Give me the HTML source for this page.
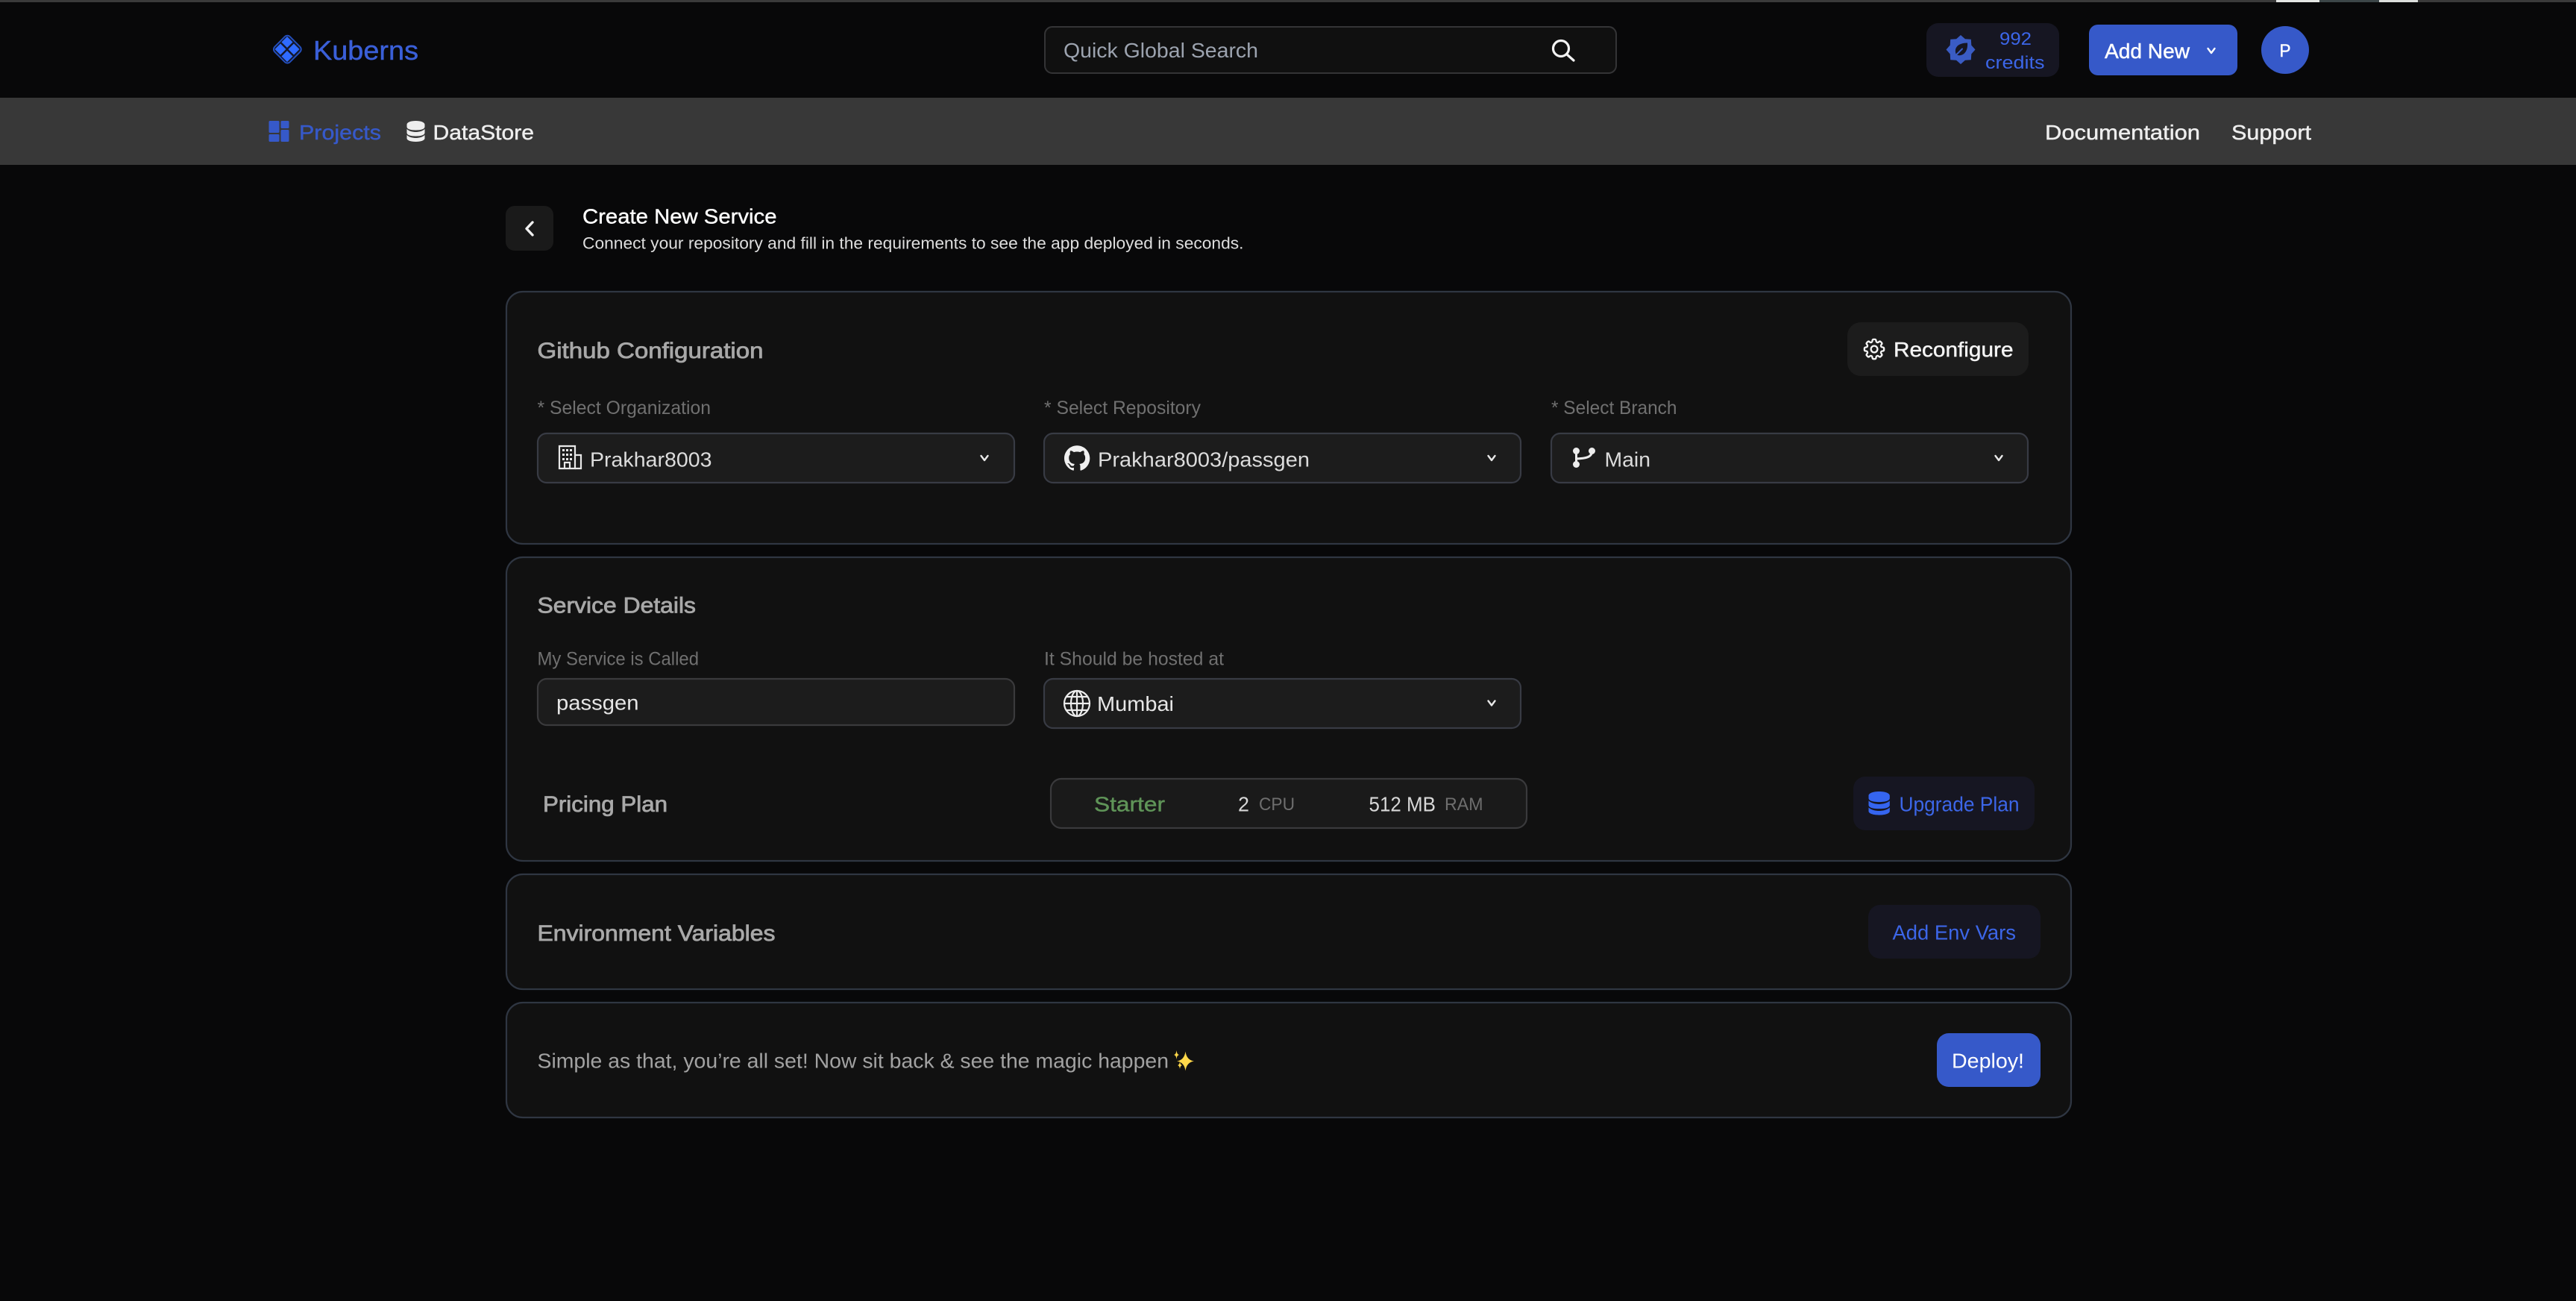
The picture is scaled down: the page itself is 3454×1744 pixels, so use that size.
<!DOCTYPE html>
<html lang="en">
<head>
<meta charset="utf-8">
<title>Kuberns - Create New Service</title>
<style>
html,body{margin:0;padding:0;background:#080809;width:3454px;height:1744px;overflow:hidden}
svg{display:block}
text{font-family:"Liberation Sans",sans-serif;font-size:28px;white-space:pre}
.med{stroke-width:.45px;paint-order:stroke}
.h{font-size:30px;fill:#a8a8a8;stroke:#a8a8a8;stroke-width:.8px}
.lbl{font-size:25px;fill:#707070}
.val{fill:#dcdcdc}
.card{fill:#111111;stroke:#2f3642;stroke-width:2.2}
.sel{fill:#1c1c1c;stroke:#383b44;stroke-width:2.2}
.chev{fill:none;stroke:#e8e8e8;stroke-width:2.4;stroke-linecap:round;stroke-linejoin:round}
</style>
</head>
<body>
<svg xmlns="http://www.w3.org/2000/svg" width="3454" height="1744" viewBox="0 0 3454 1744">
<defs>
  <path id="db" d="M0 5C0 2 5 0 12 0S24 2 24 5V8C24 11 19 12.500 12 12.500S0 11 0 8ZM0 11C3 14 8 15 12 15S21 14 24 11V16C24 19 19 20.500 12 20.500S0 19 0 16ZM0 19C3 22 8 23 12 23S21 22 24 19V23.500C24 26 19 28 12 28S0 26 0 23.500Z"/>
  <path id="chevron" d="M-4.500 -3L0 3L4.500 -3"/>
</defs>

<rect width="3454" height="1744" fill="#080809"/>

<!-- top strip -->
<rect width="3454" height="3" fill="#3a3a3a"/>
<rect x="3052" width="58" height="3" fill="#e4e6e4"/>
<rect x="3110" width="80" height="3" fill="#3c4648"/>
<rect x="3190" width="52" height="3" fill="#dcdedc"/>

<!-- header -->
<g>
  <rect x="370.500" y="51.500" width="29" height="29" rx="5" transform="rotate(45 385 66.500)" fill="#14182a" stroke="#2450c0" stroke-width="1.800"/>
  <g fill="#2f6bff">
    <path d="M385 49l7.500 7.500l-7.500 7.500l-7.500-7.500Z"/>
    <path d="M376 58.500l7.500 7.500l-7.500 7.500l-7.500-7.500Z"/>
    <path d="M394 58.500l7.500 7.500l-7.500 7.500l-7.500-7.500Z"/>
    <path d="M385 68l7.500 7.500l-7.500 7.500l-7.500-7.500Z"/>
  </g>
  <text x="420" y="80" style="font-size:36px" fill="#3a5fd8" stroke="#3a5fd8" class="med" textLength="141" lengthAdjust="spacingAndGlyphs">Kuberns</text>
</g>

<rect x="1401" y="36" width="766" height="62" rx="10" fill="#101010" stroke="#343436" stroke-width="2"/>
<text x="1426" y="77" fill="#9ca3af" textLength="261" lengthAdjust="spacingAndGlyphs">Quick Global Search</text>
<g fill="none" stroke="#f2f2f2" stroke-width="3.200" stroke-linecap="round">
  <circle cx="2093" cy="65" r="10.500"/>
  <path d="M2101 73L2110 81"/>
</g>

<rect x="2583" y="31" width="178" height="72" rx="16" fill="#161622"/>
<polygon transform="translate(2629 66.500)" fill="#3a5cc4" points="0,-19.500 5.900,-14.300 13.800,-13.800 14.300,-5.900 19.500,0 14.300,5.900 13.800,13.800 5.900,14.300 0,19.500 -5.900,14.300 -13.800,13.800 -14.300,5.900 -19.500,0 -14.300,-5.900 -13.800,-13.800 -5.900,-14.300"/>
<g transform="translate(2629 66.500)">
  <path d="M-6 7C-10 -3 -3 -9 9 -9C10 3 3 10 -6 7Z" fill="#161622"/>
  <path d="M-7 8L2 -1" stroke="#3a5cc4" stroke-width="2" stroke-linecap="round"/>
</g>
<text x="2681" y="60" fill="#3c66e8" style="font-size:24px" textLength="43" lengthAdjust="spacingAndGlyphs">992</text>
<text x="2662" y="92" fill="#3c66e8" style="font-size:24px" textLength="79.500" lengthAdjust="spacingAndGlyphs">credits</text>

<rect x="2801" y="33" width="199" height="68" rx="12" fill="#3659c9"/>
<text x="2822" y="78" fill="#fff" stroke="#fff" class="med" textLength="114" lengthAdjust="spacingAndGlyphs">Add New</text>
<use href="#chevron" x="2965" y="68" class="chev" style="stroke:#fff"/>

<circle cx="3064" cy="67" r="32" fill="#3659c9"/>
<text x="3056.500" y="76" fill="#fff" stroke="#fff" class="med" style="font-size:24px" textLength="15" lengthAdjust="spacingAndGlyphs">P</text>

<!-- nav -->
<rect y="131" width="3454" height="90" fill="#383838"/>
<g fill="#3659c9">
  <rect x="360.500" y="162" width="14" height="16" rx="1.500"/>
  <rect x="376.500" y="162" width="11" height="10" rx="1.500"/>
  <rect x="360.500" y="180" width="14" height="10" rx="1.500"/>
  <rect x="376.500" y="174" width="11" height="16" rx="1.500"/>
</g>
<text x="401" y="187" fill="#3659c9" stroke="#3659c9" class="med" textLength="110" lengthAdjust="spacingAndGlyphs">Projects</text>
<use href="#db" x="545.500" y="162" fill="#eeeeee"/>
<text x="580.500" y="187" fill="#eeeeee" stroke="#eeeeee" class="med" textLength="135.500" lengthAdjust="spacingAndGlyphs">DataStore</text>
<text x="2742" y="187" fill="#eeeeee" stroke="#eeeeee" class="med" textLength="208" lengthAdjust="spacingAndGlyphs">Documentation</text>
<text x="2992" y="187" fill="#eeeeee" stroke="#eeeeee" class="med" textLength="107" lengthAdjust="spacingAndGlyphs">Support</text>

<!-- page heading -->
<rect x="678" y="276" width="64" height="60" rx="12" fill="#1a1a1a"/>
<path d="M714 298L706 306.500L714 315" fill="none" stroke="#f0f0f0" stroke-width="3.400" stroke-linecap="round" stroke-linejoin="round"/>
<text x="781" y="299.500" fill="#fff" stroke="#fff" stroke-width=".4" textLength="260.500" lengthAdjust="spacingAndGlyphs">Create New Service</text>
<text x="781" y="333.500" fill="#dedede" style="font-size:22px" textLength="886.500" lengthAdjust="spacingAndGlyphs">Connect your repository and fill in the requirements to see the app deployed in seconds.</text>

<!-- card 1 -->
<rect class="card" x="679" y="391" width="2098" height="338" rx="22"/>
<text class="h" x="720.500" y="480" textLength="303" lengthAdjust="spacingAndGlyphs">Github Configuration</text>

<rect x="2477" y="432" width="243" height="72" rx="18" fill="#1c1c1c"/>
<g transform="translate(2495.500 450.500) scale(1.460)" fill="none" stroke="#f4f4f4" stroke-width="1.600" stroke-linejoin="round">
  <path d="M10.343 3.940c.090-.542.560-.940 1.110-.940h1.093c.550 0 1.020.398 1.110.940l.149.894c.070.424.384.764.780.930.398.164.855.142 1.205-.108l.737-.527a1.125 1.125 0 0 1 1.450.120l.773.774c.390.389.440 1.002.120 1.450l-.527.737c-.250.350-.272.806-.107 1.204.165.397.505.710.930.780l.893.150c.543.090.940.559.940 1.109v1.094c0 .550-.397 1.020-.940 1.110l-.894.149c-.424.070-.764.383-.929.780-.165.398-.143.854.107 1.204l.527.738c.320.447.269 1.060-.120 1.450l-.774.773a1.125 1.125 0 0 1-1.449.120l-.738-.527c-.350-.250-.806-.272-1.203-.107-.398.165-.710.505-.781.929l-.149.894c-.090.542-.560.940-1.110.940h-1.094c-.550 0-1.019-.398-1.110-.940l-.148-.894c-.071-.424-.384-.764-.781-.930-.398-.164-.854-.142-1.204.108l-.738.527c-.447.320-1.060.269-1.450-.120l-.773-.774a1.125 1.125 0 0 1-.120-1.450l.527-.737c.250-.350.272-.806.108-1.204-.165-.397-.506-.710-.930-.780l-.894-.150c-.542-.090-.940-.560-.940-1.109v-1.094c0-.550.398-1.020.940-1.110l.894-.149c.424-.070.765-.383.930-.780.165-.398.143-.854-.108-1.204l-.526-.738a1.125 1.125 0 0 1 .120-1.450l.773-.773a1.125 1.125 0 0 1 1.450-.120l.737.527c.350.250.807.272 1.204.107.397-.165.710-.505.780-.929l.150-.894Z"/>
  <circle cx="12" cy="12" r="3"/>
</g>
<text x="2539" y="478" fill="#f4f4f4" stroke="#f4f4f4" class="med" textLength="160.500" lengthAdjust="spacingAndGlyphs">Reconfigure</text>

<text class="lbl" x="720.500" y="555" textLength="232.500" lengthAdjust="spacingAndGlyphs">* Select Organization</text>
<text class="lbl" x="1400" y="555" textLength="210" lengthAdjust="spacingAndGlyphs">* Select Repository</text>
<text class="lbl" x="2080" y="555" textLength="168.500" lengthAdjust="spacingAndGlyphs">* Select Branch</text>

<rect class="sel" x="721" y="581" width="639" height="66" rx="12"/>
<g fill="none" stroke="#e8e8e8" stroke-width="2.200">
  <path d="M750 628V598H771V628Z"/>
  <path d="M771 610H779V628H771"/>
  <path d="M757 628V620H764V628"/>
</g>
<g fill="#e8e8e8">
  <rect x="754" y="602" width="3" height="3"/><rect x="759" y="602" width="3" height="3"/><rect x="764" y="602" width="3" height="3"/>
  <rect x="754" y="608" width="3" height="3"/><rect x="759" y="608" width="3" height="3"/><rect x="764" y="608" width="3" height="3"/>
  <rect x="754" y="614" width="3" height="3"/><rect x="759" y="614" width="3" height="3"/><rect x="764" y="614" width="3" height="3"/>
</g>
<text class="val" x="791" y="625.500" textLength="163.500" lengthAdjust="spacingAndGlyphs">Prakhar8003</text>
<use href="#chevron" x="1320" y="614" class="chev"/>

<rect class="sel" x="1400" y="581" width="639" height="66" rx="12"/>
<path transform="translate(1427 596.500) scale(1.430)" fill="#f0f0f0" d="M12 .5C5.370.5 0 5.870 0 12.500c0 5.300 3.440 9.800 8.200 11.390.6.110.82-.26.82-.58v-2.030c-3.340.73-4.040-1.610-4.040-1.610-.55-1.390-1.340-1.760-1.340-1.760-1.090-.75.08-.73.08-.73 1.210.08 1.840 1.240 1.840 1.240 1.070 1.840 2.810 1.310 3.500 1 .11-.78.42-1.310.76-1.610-2.670-.3-5.470-1.330-5.470-5.930 0-1.310.47-2.380 1.240-3.220-.13-.3-.54-1.520.12-3.180 0 0 1.010-.32 3.300 1.230a11.500 11.500 0 0 1 6 0c2.290-1.550 3.300-1.230 3.300-1.230.66 1.660.25 2.880.12 3.180.77.84 1.240 1.910 1.240 3.220 0 4.610-2.810 5.630-5.480 5.920.43.37.81 1.100.81 2.220v3.290c0 .32.22.7.83.58A12.010 12.010 0 0 0 24 12.500C24 5.870 18.630.5 12 .5z"/>
<text class="val" x="1472" y="625.500" textLength="284" lengthAdjust="spacingAndGlyphs">Prakhar8003/passgen</text>
<use href="#chevron" x="2000" y="614" class="chev"/>

<rect class="sel" x="2080" y="581" width="639" height="66" rx="12"/>
<g fill="#ececec">
  <circle cx="2113.500" cy="604.500" r="4.500"/>
  <circle cx="2113.500" cy="622.500" r="4.500"/>
  <circle cx="2134.500" cy="604.500" r="4.500"/>
</g>
<path d="M2113.500 604V622M2134.500 605C2134.500 613 2126 614.500 2113.500 615" fill="none" stroke="#ececec" stroke-width="3"/>
<text class="val" x="2151.500" y="625.500" textLength="61.500" lengthAdjust="spacingAndGlyphs">Main</text>
<use href="#chevron" x="2680" y="614" class="chev"/>

<!-- card 2 -->
<rect class="card" x="679" y="747" width="2098" height="407" rx="22"/>
<text class="h" x="720.500" y="821.500" textLength="212.500" lengthAdjust="spacingAndGlyphs">Service Details</text>
<text class="lbl" x="720.500" y="891.500" textLength="216.500" lengthAdjust="spacingAndGlyphs">My Service is Called</text>
<text class="lbl" x="1400" y="891.500" textLength="241" lengthAdjust="spacingAndGlyphs">It Should be hosted at</text>

<rect x="721" y="910" width="639" height="62" rx="12" fill="#1c1c1c" stroke="#3a3a3c" stroke-width="2.200"/>
<text class="val" x="746" y="951.500" textLength="110.500" lengthAdjust="spacingAndGlyphs" style="fill:#e6e6e6">passgen</text>

<rect class="sel" x="1400" y="910" width="639" height="66" rx="12"/>
<g fill="none" stroke="#ececec" stroke-width="2.200">
  <circle cx="1444" cy="943" r="17"/>
  <ellipse cx="1444" cy="943" rx="8" ry="17"/>
  <path d="M1444 926V960M1427 943H1461M1430 934H1458M1430 952H1458"/>
</g>
<text class="val" x="1471" y="953" textLength="103" lengthAdjust="spacingAndGlyphs" style="fill:#e6e6e6">Mumbai</text>
<use href="#chevron" x="2000" y="942.500" class="chev"/>

<text class="h" x="728" y="1088" textLength="167" lengthAdjust="spacingAndGlyphs">Pricing Plan</text>

<rect x="1409" y="1044" width="638" height="66" rx="14" fill="#1a1a1a" stroke="#3a3a3c" stroke-width="2.200"/>
<text x="1467" y="1087.500" fill="#5f9458" stroke="#5f9458" class="med" textLength="95" lengthAdjust="spacingAndGlyphs">Starter</text>
<text x="1660" y="1087.500" fill="#d8d8d8" textLength="15" lengthAdjust="spacingAndGlyphs">2</text>
<text x="1688" y="1086" fill="#6e6e6e" style="font-size:24px" textLength="48" lengthAdjust="spacingAndGlyphs">CPU</text>
<text x="1835.500" y="1087.500" fill="#d8d8d8" textLength="89.500" lengthAdjust="spacingAndGlyphs">512 MB</text>
<text x="1937" y="1086" fill="#6e6e6e" style="font-size:24px" textLength="51.500" lengthAdjust="spacingAndGlyphs">RAM</text>

<rect x="2485" y="1041" width="243" height="72" rx="16" fill="#161622"/>
<use href="#db" transform="translate(2505.500 1061) scale(1.180 1.130)" fill="#3565f0"/>
<text x="2546.500" y="1087.500" fill="#3c66e8" textLength="161" lengthAdjust="spacingAndGlyphs">Upgrade Plan</text>

<!-- card 3 -->
<rect class="card" x="679" y="1172" width="2098" height="154" rx="22"/>
<text class="h" x="720.500" y="1261" textLength="319" lengthAdjust="spacingAndGlyphs">Environment Variables</text>
<rect x="2505" y="1213" width="231" height="72" rx="16" fill="#161622"/>
<text x="2537.500" y="1259.500" fill="#3c66e8" textLength="165.500" lengthAdjust="spacingAndGlyphs">Add Env Vars</text>

<!-- card 4 -->
<rect class="card" x="679" y="1344" width="2098" height="154" rx="22"/>
<text x="720.500" y="1431.500" fill="#a2a2a2" textLength="846.500" lengthAdjust="spacingAndGlyphs">Simple as that, you’re all set! Now sit back &amp; see the magic happen</text>
<g fill="#ffd84a">
  <path d="M1589.500 1409.500Q1591 1421 1601 1422.500Q1591 1424 1589.500 1435.500Q1588 1424 1578 1422.500Q1588 1421 1589.500 1409.500Z"/>
  <path d="M1577.500 1408Q1578 1413.500 1581 1414Q1578 1414.500 1577.500 1420Q1577 1414.500 1574 1414Q1577 1413.500 1577.500 1408Z"/>
  <path d="M1582 1423Q1582.500 1427.500 1585 1428Q1582.500 1428.500 1582 1433Q1581.500 1428.500 1579 1428Q1581.500 1427.500 1582 1423Z"/>
</g>
<rect x="2597" y="1385" width="139" height="72" rx="16" fill="#3659c9"/>
<text x="2617" y="1431.500" fill="#fff" textLength="97" lengthAdjust="spacingAndGlyphs">Deploy!</text>
</svg>
</body>
</html>
